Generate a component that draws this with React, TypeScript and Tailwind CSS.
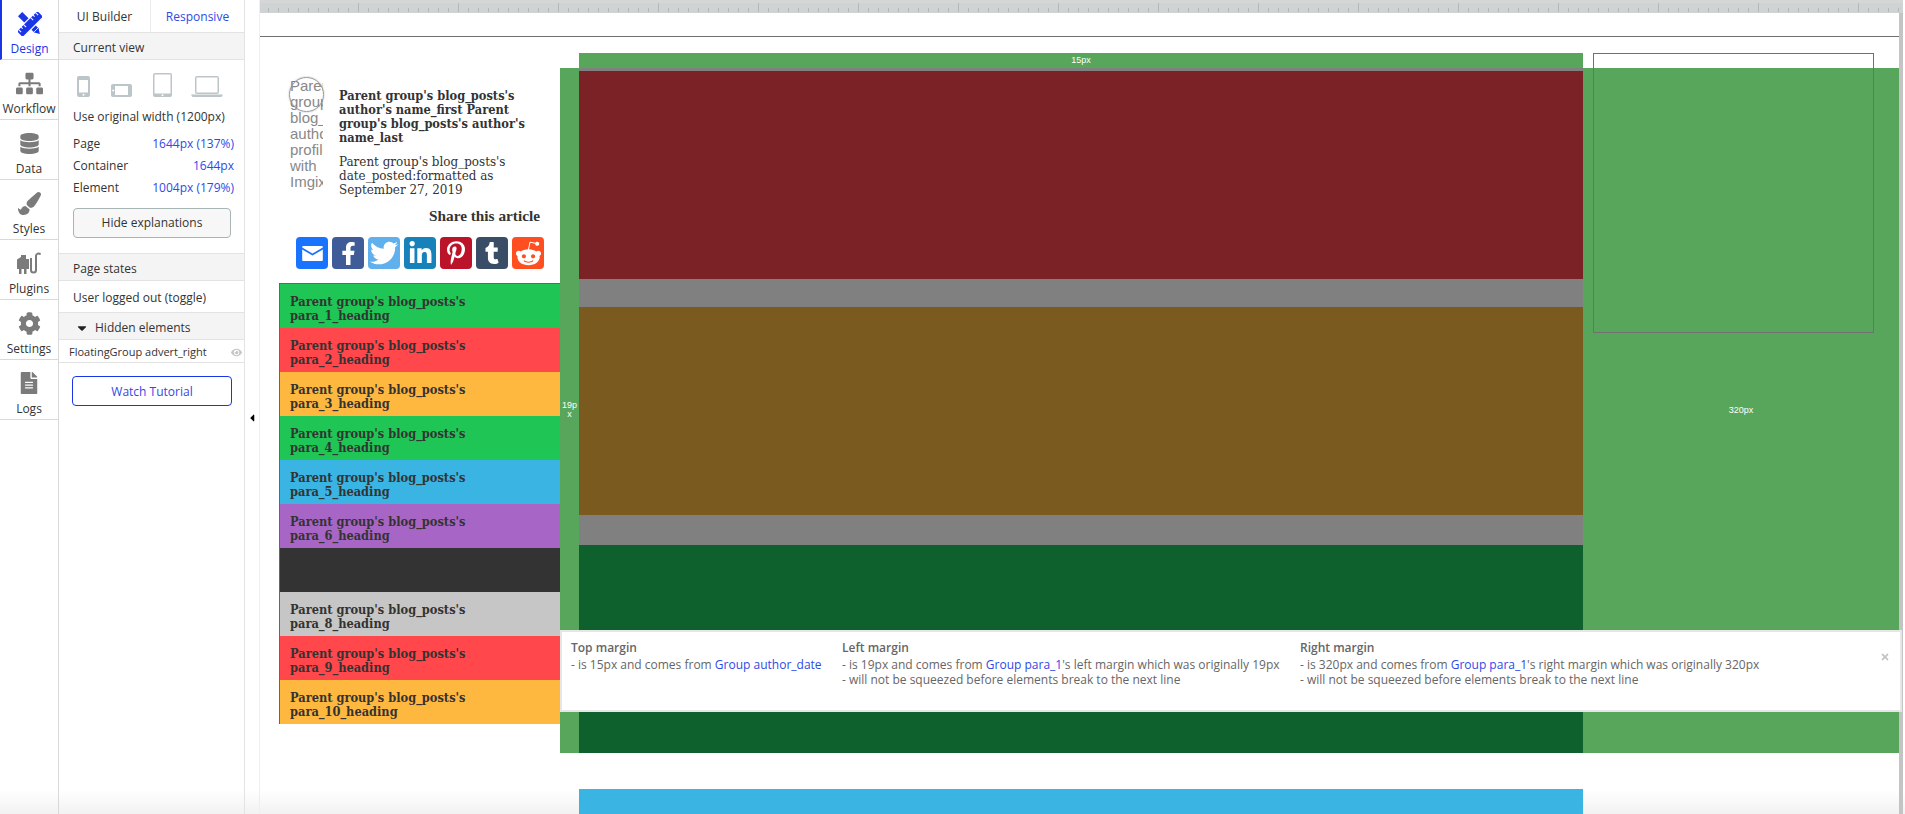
import React from "react";
import { FaSitemap, FaDatabase, FaPaintBrush, FaCog, FaFileAlt, FaEye, FaFacebookF, FaTwitter, FaLinkedinIn, FaPinterestP, FaTumblr, FaRedditAlien, FaCaretDown, FaCaretLeft, FaTimes } from "react-icons/fa";

const DesignIcon = () => (
  <svg width="24" height="24" viewBox="0 0 24 24" fill="#1a35e6">
    <g transform="rotate(45 12 12)">
      <path d="M-2 9h23l5 3-5 3H-2z" />
      <path d="M20.500 9v6" stroke="white" strokeWidth="0.800" />
    </g>
    <g transform="rotate(-45 12 12)">
      <path d="M-3 7.500h30v9H-3z" stroke="white" strokeWidth="1.200" />
      <path d="M0 7.500v4M3.500 7.500v2.500M7 7.500v4M17 7.500v4M20.500 7.500v2.500M24 7.500v4" stroke="white" strokeWidth="1" />
    </g>
  </svg>
);

const PlugIcon = () => (
  <svg width="24" height="22" viewBox="0 0 24 22" fill="#7b7b7b">
    <path d="M4 3h5v4h3v10H0V7.500L4 5z" />
    <path d="M2 17h2.500v5H2zM7 17h2.500v5H7z" />
    <path d="M14 6v12a2.500 2.500 0 0 0 5 0V4a2.500 2.500 0 0 1 4.500-1.500" fill="none" stroke="#7b7b7b" strokeWidth="2" />
  </svg>
);

const railItems = [
  { label: "Workflow", icon: <FaSitemap size={27} /> },
  { label: "Data", icon: <FaDatabase size={21} /> },
  { label: "Styles", icon: <FaPaintBrush size={23} /> },
  { label: "Plugins", icon: <PlugIcon /> },
  { label: "Settings", icon: <FaCog size={23} /> },
  { label: "Logs", icon: <FaFileAlt size={22} /> },
];

const rows = [
  { bg: "bg-[#1fc656]", name: "para_1_heading" },
  { bg: "bg-[#ff474c]", name: "para_2_heading" },
  { bg: "bg-[#ffb83f]", name: "para_3_heading" },
  { bg: "bg-[#1fc656]", name: "para_4_heading" },
  { bg: "bg-[#3ab4e3]", name: "para_5_heading" },
  { bg: "bg-[#a766c6]", name: "para_6_heading" },
  { bg: "bg-[#333333]", name: "" },
  { bg: "bg-[#c6c6c6]", name: "para_8_heading" },
  { bg: "bg-[#ff474c]", name: "para_9_heading" },
  { bg: "bg-[#ffb83f]", name: "para_10_heading" },
];

const socials = [
  { bg: "bg-[#1a73ff]", icon: (
    <svg width="21" height="15" viewBox="0 0 22 16" fill="white">
      <path d="M1 0h20a1 1 0 0 1 1 1v.6L11 8 0 1.600V1a1 1 0 0 1 1-1z" />
      <path d="M0 3.800l11 6.400 11-6.400V15a1 1 0 0 1-1 1H1a1 1 0 0 1-1-1z" />
    </svg>
  ) },
  { bg: "bg-[#3f5c99]", icon: <FaFacebookF size={23} /> },
  { bg: "bg-[#5fb0ec]", icon: <FaTwitter size={28} /> },
  { bg: "bg-[#1782b9]", icon: <FaLinkedinIn size={25} /> },
  { bg: "bg-[#bb142a]", icon: <FaPinterestP size={24} /> },
  { bg: "bg-[#3a4d66]", icon: <FaTumblr size={22} /> },
  { bg: "bg-[#ff4f20]", icon: <FaRedditAlien size={27} /> },
];

const Phone = () => (
  <svg width="13" height="21" viewBox="0 0 13 21" fill="#bcc5c8">
    <rect width="13" height="21" rx="2" />
    <rect x="2" y="4" width="9" height="12.500" fill="white" />
    <circle cx="6.500" cy="18.700" r="1" fill="white" />
  </svg>
);

const PhoneWide = () => (
  <svg width="21" height="13" viewBox="0 0 21 13" fill="#bcc5c8">
    <rect width="21" height="13" rx="2" />
    <rect x="4" y="2" width="13" height="9" fill="white" />
    <circle cx="2.200" cy="6.500" r="1" fill="white" />
  </svg>
);

const Tablet = () => (
  <svg width="19" height="24" viewBox="0 0 19 24" fill="#bcc5c8">
    <rect width="19" height="24" rx="2" />
    <rect x="1.500" y="1.500" width="16" height="19" fill="white" />
    <circle cx="9.500" cy="22.200" r="1" fill="white" />
  </svg>
);

const Laptop = () => (
  <svg width="32" height="21" viewBox="0 0 32 21" fill="#bcc5c8">
    <rect x="4" width="24" height="18" rx="2" />
    <rect x="5.500" y="1.500" width="21" height="15" fill="white" />
    <path d="M0 18.500h32l-1.500 2.500h-29z" />
  </svg>
);

const Ticks = () => (
  <div className="h-[13px] shrink-0 mr-[2px] pl-[8px] bg-[#cfd3d4] border-t-[3px] border-[#d6d6d6] flex items-end overflow-hidden">
    {Array.from({ length: 165 }).map((_, i) => (
      <div key={i} className={`w-[10px] shrink-0 flex items-end pb-px ${i % 10 === 9 ? "h-full" : "h-[5px]"}`}>
        <div className="w-px h-full bg-[#b4b8b9]" />
      </div>
    ))}
  </div>
);

const SizeRow = ({ label, value }: { label: string; value: string }) => (
  <div className="flex justify-between h-[22px] items-center pt-[4px]">
    <span>{label}</span>
    <span className="text-[#2f49e8]">{value}</span>
  </div>
);

const serif = "font-['DejaVu_Serif_Condensed','Liberation_Serif',serif]";

export default function App() {
  return (
    <div className="h-[814px] w-[1905px] flex overflow-hidden bg-white text-[#333] font-['Open_Sans',sans-serif]">
      {/* icon rail */}
      <aside className="w-[59px] shrink-0 border-r border-[#d9d9d9] text-[12px] bg-linear-to-t from-[#f2f2f2] to-white to-[3%]">
        <div className="h-[60px] border-l-2 border-[#1a35e6] bg-white border-b border-b-[#d9d9d9] flex flex-col items-center pt-[12px] pr-[1px] text-[#1a35e6]">
          <DesignIcon />
          <span className="mt-[5px] leading-[16px]">Design</span>
        </div>
        {railItems.map((it) => (
          <div key={it.label} className="h-[60px] border-b border-[#d9d9d9] flex flex-col items-center justify-end pb-[2px]">
            <div className="h-[30px] flex items-center justify-center text-[#7b7b7b]">{it.icon}</div>
            <span className="mt-[3px] leading-[16px]">{it.label}</span>
          </div>
        ))}
      </aside>

      {/* property panel */}
      <section className="w-[186px] shrink-0 border-r border-[#e3e3e3] text-[12px] bg-linear-to-t from-[#f2f2f2] to-white to-[3%]">
        <div className="h-[33px] flex border-b border-[#e3e3e3]">
          <div className="w-[92px] flex items-center justify-center pt-[2px] border-r border-[#ececec]">UI Builder</div>
          <div className="flex-1 flex items-center justify-center pt-[2px] text-[#2f49e8]">Responsive</div>
        </div>
        <div className="h-[27px] bg-[#f4f4f4] border-b border-[#e3e3e3] pl-[14px] pt-[3px] flex items-center">Current view</div>
        <div className="h-[194px] px-[14px] border-b border-[#e3e3e3]">
          <div className="flex items-end h-[37px] pl-[4px]">
            <Phone />
            <div className="ml-[21px]"><PhoneWide /></div>
            <div className="ml-[21px]"><Tablet /></div>
            <div className="ml-[19px]"><Laptop /></div>
          </div>
          <div className="mt-[11px] h-[18px] flex items-center">Use original width (1200px)</div>
          <div className="mt-[5px] w-[161px]">
            <SizeRow label="Page" value="1644px (137%)" />
            <SizeRow label="Container" value="1644px" />
            <SizeRow label="Element" value="1004px (179%)" />
          </div>
          <button className="mt-[11px] w-[158px] h-[30px] rounded-[4px] border border-[#a9b5b5] bg-[#f7f7f7] text-[12px]">Hide explanations</button>
        </div>
        <div className="h-[27px] bg-[#f4f4f4] border-b border-[#e3e3e3] pl-[14px] pt-[3px] flex items-center">Page states</div>
        <div className="h-[32px] border-b border-[#e3e3e3] pl-[14px] pt-[2px] flex items-center">User logged out (toggle)</div>
        <div className="h-[27px] bg-[#f4f4f4] border-b border-[#e3e3e3] pl-[16px] pt-[3px] flex items-center">
          <FaCaretDown size={14} className="text-[#222]" />
          <span className="ml-[6px]">Hidden elements</span>
        </div>
        <div className="h-[23px] border-b border-[#e3e3e3] pl-[10px] pr-[2px] pt-[2px] flex items-center justify-between text-[11px]">
          <span>FloatingGroup advert_right</span>
          <FaEye size={11} className="text-[#c5c5c5]" />
        </div>
        <button className="mt-[13px] ml-[13px] w-[160px] h-[30px] pt-[1px] rounded-[4px] border border-[#1a35e6] text-[#2f49e8] text-[12px]">Watch Tutorial</button>
      </section>

      {/* collapse gutter */}
      <div className="w-[15px] shrink-0 flex items-start pt-[412px] border-r border-[#efefef] bg-linear-to-t from-[#f2f2f2] to-white to-[3%]">
        <FaCaretLeft size={12} className="text-black ml-[1px]" />
      </div>

      {/* canvas */}
      <main className="relative flex-1 min-w-0 flex flex-col overflow-hidden bg-linear-to-t from-[#f2f2f2] to-white to-[3%]">
        <Ticks />
        <div className="h-[24px] border-b border-[#707070] mr-[6px] shrink-0" />

        <div className="flex mr-[6px] mt-[16px] pl-[19px] shrink-0">
          {/* article column */}
          <div className={`w-[281px] shrink-0 ${serif}`}>
            <div className="flex pl-[11px] pt-[25px]">
              <div className="relative w-[33px] h-[113px] overflow-hidden shrink-0 font-['Liberation_Sans',sans-serif] text-[15px] leading-[16px] text-[#888]">
                <span className="block w-[60px]">Parent group blog_ author profile with Imgix</span>
              </div>
              <div className="ml-[16px] w-[195px] pt-[11px] text-[13.300px] leading-[14px] text-[#333]">
                <div className="font-bold text-[12.700px]">Parent group's blog_posts's author's name_first Parent group's blog_posts's author's name_last</div>
                <div className="mt-[10px]">Parent group's blog_posts's date_posted:formatted as September 27, 2019</div>
              </div>
            </div>
            <div className="mt-[9px] pr-[20px] text-right font-bold text-[15.300px] leading-[20px] font-['Liberation_Serif',serif]">Share this article</div>
            <div className="mt-[11px] pl-[17px] flex gap-[4px]">
              {socials.map((s, i) => (
                <div key={i} className={`w-[32px] h-[32px] rounded-[4px] flex items-center justify-center text-white ${s.bg}`}>{s.icon}</div>
              ))}
            </div>
            <div className="mt-[14px] border-l border-t border-[#666]">
              {rows.map((r, i) => (
                <div key={i} className={`h-[44px] pl-[10px] pt-[11px] text-[12.700px] leading-[14px] font-bold text-[#333] ${r.bg}`}>
                  {r.name && (
                    <>
                      Parent group's blog_posts's
                      <br />
                      {r.name}
                    </>
                  )}
                </div>
              ))}
            </div>
          </div>

          {/* responsive margins */}
          <div className="flex-1 min-w-0">
            <div className="ml-[19px] w-[1004px] h-[15px] bg-[#57a65b] flex items-center justify-center text-white text-[9px] font-['Liberation_Sans',sans-serif]">15px</div>
            <div className="flex h-[685px] bg-[#57a65b] text-white font-['Liberation_Sans',sans-serif] text-[9px]">
              <div className="w-[19px] shrink-0 flex items-center justify-center text-center leading-[9px] pb-[2px]">19p<br />x</div>
              <div className="w-[1004px] shrink-0 flex flex-col pt-[3px] bg-[#808080]">
                <div className="h-[208px] bg-[#7b2226]" />
                <div className="h-[28px]" />
                <div className="h-[208px] bg-[#7b5a20]" />
                <div className="h-[30px]" />
                <div className="flex-1 bg-[#0e612d]" />
              </div>
              <div className="flex-1 flex items-center justify-center">320px</div>
            </div>
            <div className="ml-[19px] mt-[36px] w-[1004px] h-[40px] bg-[#3ab4e3]" />
          </div>
        </div>

        {/* advert placeholder outline */}
        <div className="absolute left-[1333px] top-[53px] w-[281px] h-[280px] border border-[#707070]" />

        {/* scrollbar */}
        <div className="absolute right-[2px] top-[13px] bottom-0 w-[4px] bg-[#c4c4c4]" />

        {/* explanation popup */}
        <div className="absolute left-[300px] top-[630px] w-[1342px] h-[82px] bg-white border-2 border-[#e6e6e6] text-[12px] leading-[15px] text-[#666] pl-[9px] pt-[8px] flex">
          <div className="w-[271px] shrink-0">
            <div className="font-semibold mb-[2px]">Top margin</div>
            <div>- is 15px and comes from <span className="text-[#2f49e8]">Group author_date</span></div>
          </div>
          <div className="w-[458px] shrink-0">
            <div className="font-semibold mb-[2px]">Left margin</div>
            <div>- is 19px and comes from <span className="text-[#2f49e8]">Group para_1</span>'s left margin which was originally 19px</div>
            <div>- will not be squeezed before elements break to the next line</div>
          </div>
          <div className="flex-1">
            <div className="font-semibold mb-[2px]">Right margin</div>
            <div>- is 320px and comes from <span className="text-[#2f49e8]">Group para_1</span>'s right margin which was originally 320px</div>
            <div>- will not be squeezed before elements break to the next line</div>
          </div>
          <FaTimes size={10} className="absolute right-[10px] top-[20px] text-[#c4c4c4]" />
        </div>

        {/* avatar ring */}
        <div className="absolute left-[29px] top-[77px] w-[35px] h-[35px] rounded-full border border-[#999] shadow-[0_0_2px_rgba(0,0,0,0.3)]" />
      </main>
    </div>
  );
}
